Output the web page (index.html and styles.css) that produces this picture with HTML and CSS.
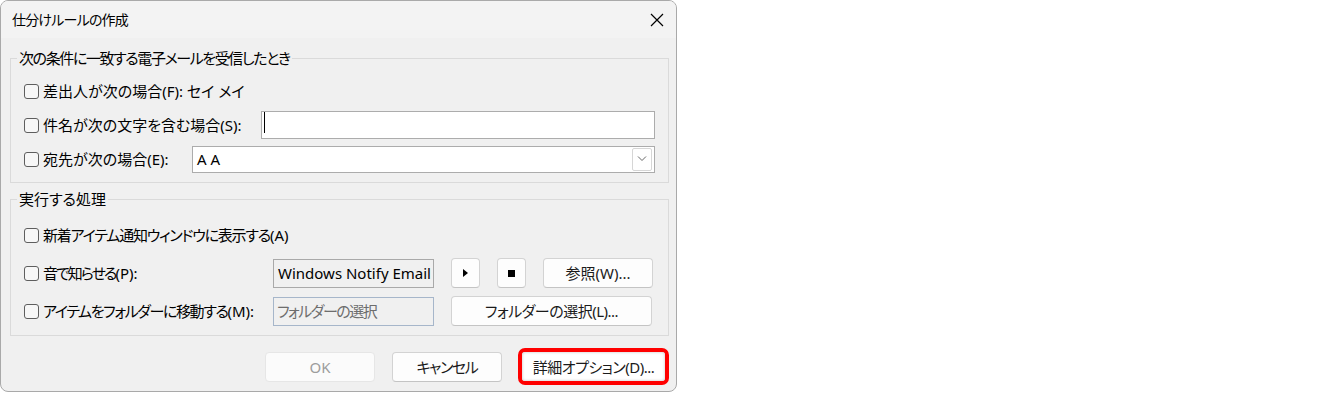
FILE: index.html
```html
<!DOCTYPE html>
<html lang="ja">
<head>
  <meta charset="UTF-8" />
  <title>仕分けルールの作成</title>
  <link rel="stylesheet" href="styles.css">
</head>
<body>
  <div class="dialog">
    <div class="titlebar">
      <span class="title">仕分けルールの作成</span>
      <span class="close">
        <svg width="14" height="14" viewBox="0 0 14 14"><path d="M1 1 L13 13 M13 1 L1 13" stroke="#000" stroke-width="1.2" fill="none"/></svg>
      </span>
    </div>

    <div class="content">
      <fieldset class="group">
        <legend class="legend-cond">次の条件に一致する電子メールを受信したとき</legend>
        <div class="rows rows-cond">
          <div class="row">
            <label class="check"><input type="checkbox"><span>差出人が次の場合(F): セイ メイ</span></label>
          </div>
          <div class="row">
            <label class="check lab-subject"><input type="checkbox"><span>件名が次の文字を含む場合(S):</span></label>
            <div class="field field-text"><span class="caret"></span></div>
          </div>
          <div class="row">
            <label class="check lab-to"><input type="checkbox"><span>宛先が次の場合(E):</span></label>
            <div class="field combo">
              <span class="combo-value">A A</span>
              <span class="combo-btn">
                <svg width="10" height="6" viewBox="0 0 10 6"><path d="M1 0.5 L5 4.5 L9 0.5" stroke="#666" stroke-width="1" fill="none"/></svg>
              </span>
            </div>
          </div>
        </div>
      </fieldset>

      <fieldset class="group group-action">
        <legend>実行する処理</legend>
        <div class="rows rows-action">
          <div class="row">
            <label class="check"><input type="checkbox"><span><span class="txt-popup">新着アイテム通知ウィンドウに表示する</span>(A)</span></label>
          </div>
          <div class="row">
            <label class="check lab-action"><input type="checkbox"><span><span class="txt-sound">音で知らせる</span>(P):</span></label>
            <div class="field field-ro">Windows Notify Email</div>
            <button class="btn btn-icon"><span class="play"></span></button>
            <button class="btn btn-icon"><span class="stop"></span></button>
            <button class="btn btn-browse">参照(W)...</button>
          </div>
          <div class="row">
            <label class="check lab-action"><input type="checkbox"><span><span class="txt-move">アイテムをフォルダーに移動する</span>(M):</span></label>
            <div class="field field-disabled">フォルダーの選択</div>
            <button class="btn btn-folder">フォルダーの選択(L)...</button>
          </div>
        </div>
      </fieldset>
    </div>

    <div class="actions">
      <button class="btn btn-main" disabled>OK</button>
      <button class="btn btn-main btn-cancel">キャンセル</button>
      <span class="highlight"><button class="btn btn-detail">詳細オプション(D)...</button></span>
    </div>
  </div>
</body>
</html>
```

FILE: styles.css
```css
body {
  margin: 0;
  background: #ffffff;
}

.dialog {
  width: 675px;
  height: 390px;
  border: 1px solid #a9a9a9;
  border-radius: 8px;
  background: #f0f0f0;
  display: flex;
  flex-direction: column;
  overflow: hidden;
  font-family: "Noto Sans", "Noto Sans CJK JP", sans-serif;
  font-size: 15px;
  font-feature-settings: "palt";
  color: #000;
  line-height: 20px;
}

.titlebar {
  height: 37px;
  display: flex;
  align-items: center;
  justify-content: space-between;
  padding: 0 12px 0 11px;
  background: #f3f3f3;
}

.title {
  font-size: 14px;
  letter-spacing: -0.8px;
}

.close {
  display: flex;
}

.content {
  padding: 10px 7px 0 9px;
}

.group {
  margin: 0;
  padding: 0;
  border: 1px solid #dadada;
  min-width: 0;
}

.group legend {
  margin-left: 6px;
  padding: 0 2px;
  line-height: 20px;
}

.group .legend-cond {
  letter-spacing: -1.4px;
}

.group-action {
  margin-top: 6px;
}

.rows {
  display: flex;
  flex-direction: column;
}

.rows-cond {
  padding: 9px 13px 9px 13px;
  gap: 6px;
}

.rows-cond .row {
  height: 28px;
}

.rows-action {
  padding: 11px 15px 9px 13px;
  gap: 8px;
}

.rows-action .row {
  height: 30px;
}

.row {
  display: flex;
  align-items: center;
}

.check {
  display: flex;
  align-items: center;
  gap: 4px;
  flex-shrink: 0;
  white-space: nowrap;
}

.check input {
  appearance: none;
  margin: 0;
  width: 15px;
  height: 15px;
  border: 1px solid #5e5e5e;
  border-radius: 3px;
  background: #f7f7f7;
}

.txt-popup {
  letter-spacing: -1.2px;
}

.txt-sound {
  letter-spacing: -2px;
}

.txt-move {
  letter-spacing: -1.4px;
}

.lab-subject {
  width: 237px;
}

.lab-to {
  width: 168px;
}

.lab-action {
  width: 249px;
}

.field {
  box-sizing: border-box;
  border: 1px solid #acacac;
  background: #fff;
  display: flex;
  align-items: center;
  white-space: nowrap;
  overflow: hidden;
}

.field-text {
  flex: 1;
  height: 28px;
  padding-left: 2px;
  align-items: flex-start;
}

.caret {
  width: 1px;
  height: 21px;
  background: #000;
}

.combo {
  flex: 1;
  height: 27px;
  padding: 1px 2px 1px 4px;
  justify-content: space-between;
}

.combo-btn {
  box-sizing: border-box;
  width: 20px;
  height: 23px;
  border: 1px solid #d6d6d6;
  border-radius: 2px;
  background: #fff;
  display: flex;
  align-items: center;
  justify-content: center;
}

.field-ro {
  width: 161px;
  height: 29px;
  padding-left: 4px;
  background: #f0f0f0;
  border-color: #a9a9a9;
}

.field-disabled {
  width: 161px;
  height: 29px;
  padding-left: 3px;
  background: #f0f0f0;
  border-color: #a6b6ca;
  color: #6d6d6d;
  letter-spacing: -1.5px;
}

.btn {
  box-sizing: border-box;
  height: 30px;
  margin: 0;
  padding: 0;
  border: 1px solid #d3d3d3;
  border-bottom-color: #c4c4c4;
  border-radius: 4px;
  background: #fdfdfd;
  font: inherit;
  font-feature-settings: "palt";
  color: #1b1b1b;
  display: flex;
  align-items: center;
  justify-content: center;
}

.btn-icon {
  width: 29px;
  margin-left: 17px;
}

.btn-browse {
  width: 110px;
  margin-left: 17px;
}

.btn-folder {
  width: 201px;
  margin-left: 17px;
  letter-spacing: -0.5px;
}

.play {
  width: 0;
  height: 0;
  border-top: 4px solid transparent;
  border-bottom: 4px solid transparent;
  border-left: 5px solid #000;
}

.stop {
  width: 7px;
  height: 7px;
  background: #000;
}

.actions {
  margin-top: 12px;
  padding-right: 7px;
  display: flex;
  justify-content: flex-end;
  align-items: center;
  gap: 17px;
}

.btn-main {
  width: 110px;
}

.btn-cancel {
  letter-spacing: -1.4px;
}

.btn-main:disabled {
  background: #fbfbfb;
  border-color: #e6e6e6;
  color: #9d9d9d;
}

.highlight {
  margin-left: -1px;
  display: flex;
  border: 4px solid #ff0000;
  border-radius: 7px;
}

.btn-detail {
  width: 143px;
  height: 29px;
  border: none;
  border-radius: 3px;
  background: #fff;
  letter-spacing: -0.5px;
  box-shadow: inset 0 0 3px rgba(0, 0, 0, 0.25);
}
```
